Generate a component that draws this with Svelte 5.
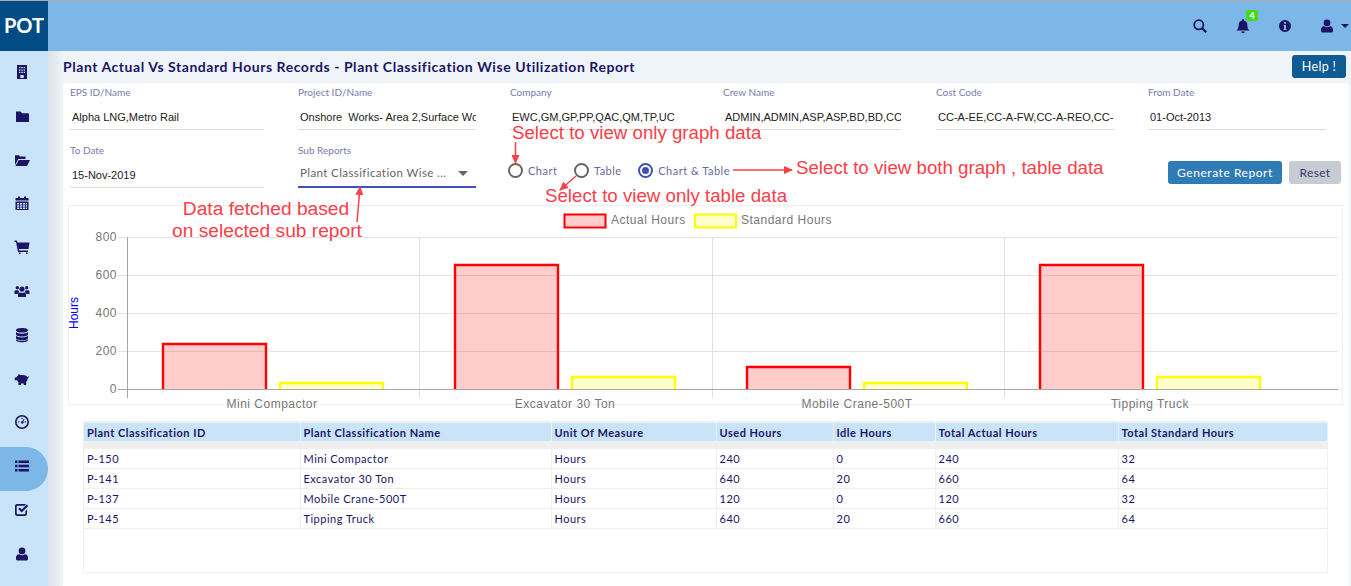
<script>
	const sideIcons = [
		'M3 1h10v14H3z M5 3v1.3h1.4V3z M7.300 3v1.3h1.4V3z M9.600 3v1.3H11V3z M5 5.400v1.3h1.4V5.400z M7.300 5.400v1.3h1.4V5.400z M9.600 5.400v1.3H11V5.400z M5 7.800v1.3h1.4V7.800z M7.300 7.800v1.3h1.4V7.800z M9.600 7.800v1.3H11V7.800z M6.300 11v3h3.400v-3z',
		'M2 3.500h4.500L8 5.300h6a1 1 0 0 1 1 1V14H2z',
		'M1 13V3.200h4l1 1.400h5.500V7H4.300z M4.800 8H16l-3 6H1.400z',
		'M1.500 3H4V1.500h2V3h4V1.500h2V3h2.500v2.600h-13z M1.500 6.500h13V15h-13z M3 8v1.400h2.200V8z M6 8v1.400h2V8z M8.800 8v1.400H11V8z M11.800 8v1.400H13V8z M3 10.300v1.400h2.200v-1.400z M6 10.300v1.400h2v-1.400z M8.800 10.300v1.400H11v-1.400z M11.800 10.300v1.400H13v-1.400z M3 12.500V14h2.200v-1.500z M6 12.500V14h2v-1.500z M8.800 12.500V14H11v-1.500z M11.800 12.500V14H13v-1.500z',
		'M0.500 1.500h2.400l.5 2H15.500l-1 6.500H5l.3 1.500h8.700V13H4L2 3H.5z M5 13.500h1.600V15H5z M12 13.500h1.600V15H12z',
		'M3.300 3a1.700 1.700 0 1 1 0 3.400 1.700 1.700 0 0 1 0-3.400z M12.700 3a1.700 1.700 0 1 1 0 3.400 1.700 1.700 0 0 1 0-3.400z M8 3.400a2.600 2.600 0 1 1 0 5.200 2.600 2.600 0 0 1 0-5.200z M.5 11V8.600c0-.8.6-1.400 1.400-1.400h2.400c.3 1 .8 1.700 1.200 2-.9.3-1.700 1-1.900 1.800z M15.500 11V8.600c0-.8-.6-1.400-1.400-1.400h-2.400c-.3 1-.8 1.700-1.200 2 .9.3 1.700 1 1.900 1.800z M5.400 9.800h5.200c.8 0 1.400.7 1.400 1.500V14H4v-2.700c0-.8.6-1.500 1.400-1.500z',
		'M8 1c3.400 0 6 .9 6 2.300S11.400 5.600 8 5.600 2 4.700 2 3.300 4.600 1 8 1z M2 5c1 1.100 3.300 1.700 6 1.700S13 6.100 14 5v2.200c0 1.300-2.600 2.300-6 2.300S2 8.500 2 7.200z M2 8.800c1 1.100 3.300 1.700 6 1.700s5-.6 6-1.700V11c0 1.300-2.600 2.300-6 2.300S2 12.300 2 11z M2 12.200c1 1.100 3.300 1.700 6 1.700s5-.6 6-1.700v.8c0 1.300-2.600 2.300-6 2.300S2 14.300 2 13z',
		'M4.500 3.300c.9.100 1.700.5 2.300.9 2.700-.6 5.700 0 6.700 2 .4-.1.7-.5.7-1h.8c0 1-.6 1.800-1.300 2 .1 1.500-.6 2.600-1.500 3.400V14h-2.500v-1.500H7V14H4.500v-2.700C3.700 10.700 3.200 10 3 9.300H.7V6.500h1.500c.4-.8 1-1.400 1.700-1.800z',
		'M8 1a7 7 0 1 1 0 14A7 7 0 0 1 8 1z M8 2.600a5.400 5.400 0 1 0 0 10.800A5.400 5.400 0 0 0 8 2.600z M7.400 3.700h1.200v1.300H7.400z M4.100 7.300h1.300v1.200H4.100z M10.600 7.300h1.300v1.200h-1.300z M8.500 7l1.300-2.300.7.400-1.200 2.300a1.300 1.300 0 1 1-.8-.4z',
		'M1 2.500h2.500V5H1z M4.500 2.500H15V5H4.500z M1 6.700h2.500v2.500H1z M4.500 6.700H15v2.500H4.500z M1 11h2.500v2.500H1z M4.500 11H15v2.500H4.500z',
		'M3.500 2H12l-1.500 1.700h-7a.8.8 0 0 0-.8.8v7c0 .4.4.8.8.8h7c.4 0 .8-.4.8-.8V9.300L13 7.600v4.200a2.200 2.200 0 0 1-2.200 2.200H3.200A2.200 2.200 0 0 1 1 11.800V4.200A2.200 2.200 0 0 1 3.500 2z M4.300 7l1.400-1.400 2 2 5-5L14.200 4l-6.500 6.500z',
		'M8 1.500a3.400 3.400 0 1 1 0 6.800 3.400 3.400 0 0 1 0-6.800z M5 8.300c.8.600 1.900 1 3 1s2.200-.4 3-1c1.800 0 3 1.400 3 3.200V13c0 .9-.7 1.500-1.500 1.500h-9C2.700 14.500 2 13.900 2 13v-1.500c0-1.800 1.200-3.200 3-3.200z'
	];

	const fields = [
		{ label: 'EPS ID/Name', value: 'Alpha LNG,Metro Rail', wide: true },
		{ label: 'Project ID/Name', value: 'Onshore  Works- Area 2,Surface Works' },
		{ label: 'Company', value: 'EWC,GM,GP,PP,QAC,QM,TP,UC' },
		{ label: 'Crew Name', value: 'ADMIN,ADMIN,ASP,ASP,BD,BD,CC' },
		{ label: 'Cost Code', value: 'CC-A-EE,CC-A-FW,CC-A-REO,CC-' },
		{ label: 'From Date', value: '01-Oct-2013' }
	];

	const columns = [
		['Plant Classification ID', 216],
		['Plant Classification Name', 251],
		['Unit Of Measure', 165],
		['Used Hours', 117],
		['Idle Hours', 102],
		['Total Actual Hours', 183],
		['Total Standard Hours', 209]
	];

	const rows = [
		['P-150', 'Mini Compactor', 'Hours', '240', '0', '240', '32'],
		['P-141', 'Excavator 30 Ton', 'Hours', '640', '20', '660', '64'],
		['P-137', 'Mobile Crane-500T', 'Hours', '120', '0', '120', '32'],
		['P-145', 'Tipping Truck', 'Hours', '640', '20', '660', '64']
	];

	// page coordinates, the chart svg uses a matching viewBox
	const groups = [
		{ name: 'Mini Compactor', x: 163, actual: 344, standard: 383, label: 272 },
		{ name: 'Excavator 30 Ton', x: 455, actual: 265, standard: 377, label: 565 },
		{ name: 'Mobile Crane-500T', x: 747, actual: 367, standard: 383, label: 857 },
		{ name: 'Tipping Truck', x: 1040, actual: 265, standard: 377, label: 1150 }
	];
	const ticks = [['800', 237], ['600', 275], ['400', 313], ['200', 351], ['0', 389]];

	const bar = (x, top) => `M${x} 389V${top}H${x + 103}V389`;
</script>

<div class="app">
	<header class="topbar">
		<div class="logo">POT</div>
		<div class="tools">
			<svg class="tool" width="16" height="16" viewBox="0 0 16 16"><circle cx="6.800" cy="6.800" r="4.600" fill="none" stroke="#1c1464" stroke-width="1.800" /><path d="M10.200 10.200l4 4" stroke="#1c1464" stroke-width="2.200" /></svg>
			<div class="bell">
				<svg width="16" height="16" viewBox="0 0 16 16"><path fill="#1c1464" d="M8 1a1 1 0 0 1 1 1v.6c2 .4 3.300 2 3.300 4 0 3.400.8 4.500 2.200 6H1.500c1.400-1.500 2.200-2.600 2.200-6 0-2 1.300-3.600 3.300-4V2a1 1 0 0 1 1-1z M6.200 13.500h3.600a1.800 1.800 0 0 1-3.600 0z" /></svg>
				<span class="badge">4</span>
			</div>
			<svg class="tool" width="16" height="16" viewBox="0 0 16 16"><path fill="#1c1464" fill-rule="evenodd" d="M8 2a6 6 0 1 1 0 12A6 6 0 0 1 8 2z M7 4v1.800h2V4z M6.500 7v1.100H7V11h-.5v1h3v-1H9V7z" /></svg>
			<div class="account">
				<svg width="16" height="16" viewBox="0 0 16 16"><path fill="#1c1464" d={sideIcons[11]} /></svg>
				<span class="caret"></span>
			</div>
		</div>
	</header>

	<div class="body">
		<nav class="sidebar">
			{#each sideIcons as d, i}
				<div class="nav-item" class:active={i === 9}>
					<svg width="16" height="16" viewBox="0 0 16 16"><path fill="#1c1464" fill-rule="evenodd" {d} /></svg>
				</div>
			{/each}
		</nav>

		<main class="main">
			<div class="title-row">
				<h1>Plant Actual Vs Standard Hours Records - Plant Classification Wise Utilization Report</h1>
				<button class="help">Help !</button>
			</div>

			<section class="card">
				<div class="form">
					{#each fields as f}
						<div class="field" class:wide={f.wide}>
							<span class="label">{f.label}</span>
							<div class="value">{f.value}</div>
						</div>
					{/each}
					<div class="field wide">
						<span class="label">To Date</span>
						<div class="value">15-Nov-2019</div>
					</div>
					<div class="field select">
						<span class="label">Sub Reports</span>
						<div class="value">
							<span>Plant Classification Wise ...</span>
							<i class="select-arrow"></i>
						</div>
					</div>
					<div class="radios">
						<span class="radio"><i></i>Chart</span>
						<span class="radio"><i></i>Table</span>
						<span class="radio on"><i></i>Chart &amp; Table</span>
					</div>
					<div class="actions">
						<button class="generate">Generate Report</button>
						<button class="reset">Reset</button>
					</div>
				</div>

				<div class="chart">
					<svg width="1275" height="200" viewBox="68 205 1275 200">
						<rect x="564.500" y="214.500" width="41" height="13" fill="#ffcccc" stroke="#ff0000" stroke-width="2" />
						<text class="legend" x="611" y="224">Actual Hours</text>
						<rect x="695" y="214.500" width="41" height="13" fill="#ffffcc" stroke="#ffff00" stroke-width="2" />
						<text class="legend" x="741" y="224">Standard Hours</text>
						{#each ticks as [t, y]}
							{#if t !== '0'}
								<line x1="118" x2="1338" y1={y + 0.5} y2={y + 0.5} stroke="#e4e4e4" />
							{/if}
							<text class="tick" x="117" y={y + 4}>{t}</text>
						{/each}
						<line x1="127.500" x2="127.500" y1="237" y2="398" stroke="#a6a6a6" />
						{#each [419.500, 712.500, 1004.500] as x}
							<line x1={x} x2={x} y1="237" y2="398" stroke="#e0e0e0" />
						{/each}
						{#each groups as g}
							<path d={bar(g.x, g.actual)} fill="#ff0000" fill-opacity="0.2" stroke="#ff0000" stroke-width="2.400" />
							<path d={bar(g.x + 117, g.standard)} fill="#ffff00" fill-opacity="0.2" stroke="#ffff00" stroke-width="2.400" />
							<text class="cat" x={g.label} y="408">{g.name}</text>
						{/each}
						<line x1="118" x2="1338" y1="389.500" y2="389.500" stroke="#a6a6a6" />
						<text class="axis" transform="translate(78 329) rotate(-90)">Hours</text>
					</svg>
				</div>

				<div class="table-box">
					<table>
						<colgroup>
							{#each columns as [, w]}
								<col style:width="{w}px" />
							{/each}
						</colgroup>
						<thead>
							<tr>
								{#each columns as [name]}
									<th>{name}</th>
								{/each}
							</tr>
						</thead>
						<tbody>
							{#each rows as row}
								<tr>
									{#each row as cell}
										<td>{cell}</td>
									{/each}
								</tr>
							{/each}
						</tbody>
					</table>
				</div>
			</section>
		</main>
	</div>

	<svg class="notes" width="1351" height="586" viewBox="0 0 1351 586">
		<defs>
			<marker id="head" markerWidth="9" markerHeight="8" refX="8" refY="4" orient="auto" markerUnits="userSpaceOnUse">
				<path d="M0 0L9 4L0 8z" fill="#f9404a" />
			</marker>
		</defs>
		<text x="512" y="139">Select to view only graph data</text>
		<text x="545" y="202">Select to view only table data</text>
		<text x="796" y="174">Select to view both graph , table data</text>
		<text class="big" x="266" y="215" text-anchor="middle">Data fetched based</text>
		<text class="big" x="267" y="237" text-anchor="middle">on selected sub report</text>
		<path d="M515.500 142V163" marker-end="url(#head)" />
		<path d="M576 176L560 190" marker-end="url(#head)" />
		<path d="M733 170H792" marker-end="url(#head)" />
		<path d="M357 222L360 187" marker-end="url(#head)" />
	</svg>
</div>

<style>
	:global(body) {
		margin: 0;
	}

	.app {
		position: relative;
		width: 1351px;
		height: 586px;
		overflow: hidden;
		display: flex;
		flex-direction: column;
		font-family: Lato, sans-serif;
		color: #1c1464;
		background: #eef4f8;
	}

	.topbar {
		display: flex;
		justify-content: space-between;
		height: 50px;
		flex: none;
		border-top: 1px solid #aaa;
		background: #7cb7e8;
	}

	.logo {
		width: 48px;
		background: #024c85;
		color: #fff;
		font-size: 20px;
		font-weight: 700;
		line-height: 48px;
		text-align: center;
	}

	.tools {
		display: flex;
		align-items: center;
		padding: 0 2px 0 0;
	}

	.tool {
		display: block;
	}

	.tools > .tool:first-child {
		margin-right: 27px;
	}

	.bell {
		position: relative;
		display: flex;
		margin-right: 26px;
	}

	.badge {
		position: absolute;
		left: 11px;
		top: -8px;
		width: 12px;
		height: 11px;
		border-radius: 2px;
		background: #3fdc1c;
		color: #fff;
		font-size: 9px;
		font-weight: 900;
		line-height: 11px;
		text-align: center;
	}

	.account {
		display: flex;
		align-items: center;
		gap: 6px;
		margin-left: 26px;
	}

	.caret {
		border: 4px solid transparent;
		border-top-color: #1c1464;
		border-bottom: 0;
	}

	.body {
		flex: 1;
		display: flex;
		min-height: 0;
	}

	.sidebar {
		width: 48px;
		flex: none;
		padding-top: 2px;
		background: #c9e4f8;
	}

	.nav-item {
		height: 43.800px;
		box-sizing: border-box;
		padding: 11px 14px 0;
	}

	.nav-item svg {
		display: block;
	}

	.nav-item.active {
		background: #7cb7e8;
		border-radius: 0 22px 22px 0;
	}

	.main {
		flex: 1;
		padding: 0 2px 0 15px;
		background: linear-gradient(90deg, #dbe3e8, #eef4f8 15px);
	}

	.title-row {
		display: flex;
		align-items: center;
		justify-content: space-between;
		height: 30px;
		padding: 0 3px 2px 0;
	}

	h1 {
		margin: 0;
		font-size: 14px;
		font-weight: 700;
		letter-spacing: 0.55px;
	}

	button {
		border: 0;
		border-radius: 3px;
		font-family: inherit;
		font-size: 12px;
		padding: 0;
	}

	.help {
		width: 54px;
		height: 23px;
		background: #0f5b94;
		color: #fff;
		font-size: 12.500px;
		letter-spacing: 0.3px;
	}

	.card {
		height: 503px;
		padding: 0 6px 0 7px;
		background: #fff;
		border-radius: 4px 4px 0 0;
		box-sizing: border-box;
	}

	.form {
		display: grid;
		grid-template-columns: 228px 212px 213px 213px 212px 193px;
		grid-auto-rows: 58px;
	}

	.field {
		width: 178px;
		height: 47px;
		box-sizing: border-box;
		border-bottom: 1px solid #ddd;
		padding-top: 4px;
	}

	.field.wide {
		width: 194px;
	}

	.label {
		display: block;
		font-size: 10px;
		line-height: 11px;
		color: #7b7bab;
	}

	.value {
		margin-top: 12px;
		padding-left: 2px;
		font-family: 'Liberation Sans', sans-serif;
		font-size: 11px;
		line-height: 14px;
		color: #222;
		white-space: pre;
		overflow: hidden;
	}

	.select {
		border-bottom: 2px solid #3f51b5;
	}

	.select .value {
		display: flex;
		justify-content: space-between;
		align-items: center;
		margin-top: 10px;
		padding-right: 8px;
		font-family: Lato, sans-serif;
		font-size: 11.500px;
		letter-spacing: 0.4px;
		color: #666;
	}

	.select-arrow {
		border: 5px solid transparent;
		border-top-color: #666;
		border-bottom: 0;
	}

	.radios {
		grid-column: 3 / 5;
		display: flex;
		gap: 16.500px;
		margin-left: -2px;
		padding-top: 21px;
		height: 16px;
	}

	.radio {
		display: flex;
		align-items: center;
		gap: 5px;
		font-size: 11px;
		letter-spacing: 0.5px;
		color: #6a6a9a;
	}

	.radio i {
		width: 11px;
		height: 11px;
		border: 2px solid #666;
		border-radius: 50%;
		position: relative;
	}

	.radio.on i {
		border-color: #3f51b5;
	}

	.radio.on i::after {
		content: '';
		position: absolute;
		inset: 2px;
		border-radius: 50%;
		background: #3f51b5;
	}

	.actions {
		grid-column: 6;
		display: flex;
		justify-content: flex-end;
		gap: 7px;
		padding-top: 20px;
		height: 22px;
	}

	.generate {
		width: 114px;
		height: 23px;
		background: #2f7bb6;
		color: #fff;
		letter-spacing: 0.55px;
	}

	.reset {
		width: 52px;
		height: 23px;
		background: #c8cbd1;
		color: #3a3a70;
		letter-spacing: 0.35px;
	}

	.chart {
		margin: 6px 0 0 -2px;
		width: 1275px;
		height: 200px;
		box-sizing: border-box;
		border: 1px solid #efefef;
	}

	.chart svg {
		display: block;
		margin: -1px;
		overflow: visible;
	}

	.chart text {
		font-family: 'Liberation Sans', sans-serif;
		fill: #777;
	}

	.legend {
		font-size: 12px;
		letter-spacing: 0.5px;
	}

	.tick {
		font-size: 12px;
		letter-spacing: 0.5px;
		text-anchor: end;
	}

	.cat {
		font-size: 12px;
		letter-spacing: 0.5px;
		text-anchor: middle;
	}

	.chart .axis {
		font-size: 12px;
		fill: #0000ff;
	}

	.table-box {
		width: 1245px;
		height: 152px;
		margin: 16px 0 0 13px;
		box-sizing: border-box;
		border: 1px solid #efefef;
		overflow: hidden;
	}

	table {
		width: 1243px;
		table-layout: fixed;
		border-collapse: collapse;
		font-size: 11px;
		letter-spacing: 0.5px;
	}

	th {
		height: 18px;
		padding: 0 3px;
		background: #c9e4f8;
		border: 2px solid #efefef;
		border-width: 1px 1px 8px 0;
		font-weight: 700;
		text-align: left;
	}

	thead tr {
		border-bottom: 1px solid #fff;
	}

	td {
		height: 19px;
		padding: 0 3px;
		border: 1px solid #efefef;
		border-width: 0 1px 1px 0;
		white-space: nowrap;
	}

	.notes {
		position: absolute;
		inset: 0;
		pointer-events: none;
	}

	.notes text {
		font-family: 'Liberation Sans', sans-serif;
		font-size: 18.700px;
		fill: #f9404a;
	}

	.notes text.big {
		font-size: 19.200px;
	}

	.notes path {
		fill: none;
		stroke: #f9404a;
		stroke-width: 1.500;
	}

	.notes marker path {
		fill: #f9404a;
		stroke: none;
	}
</style>
